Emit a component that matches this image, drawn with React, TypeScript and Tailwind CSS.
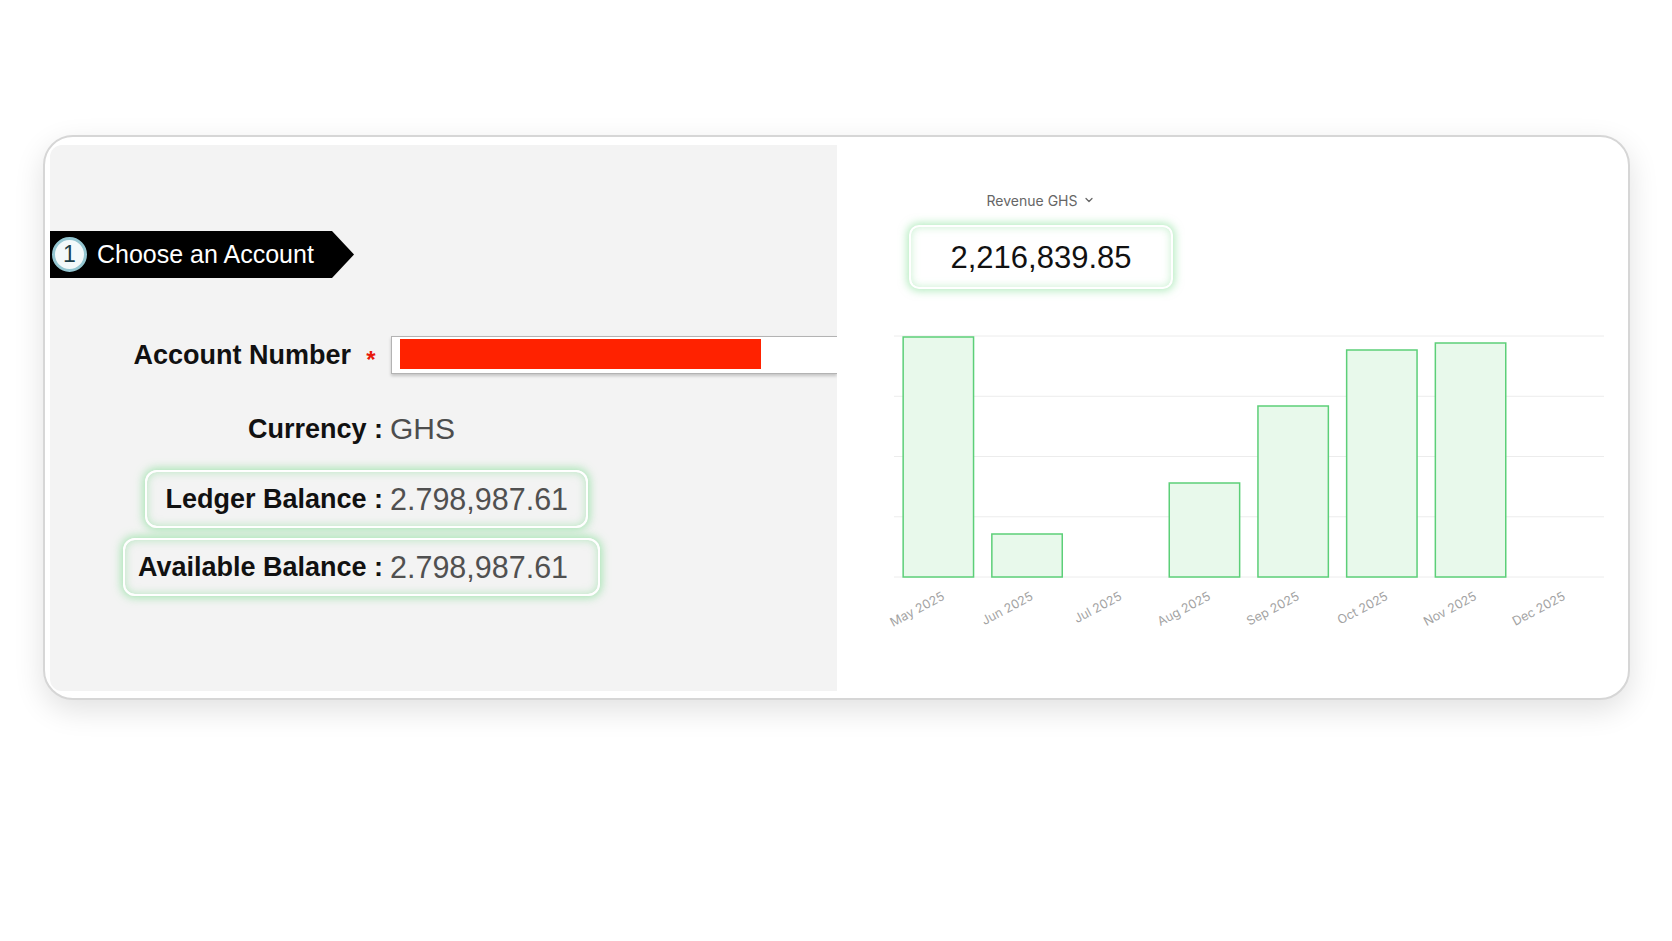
import { ChevronDown } from 'lucide-react';

const bars = [
  { label: 'May 2025', h: 240 },
  { label: 'Jun 2025', h: 43 },
  { label: 'Jul 2025', h: 0 },
  { label: 'Aug 2025', h: 94 },
  { label: 'Sep 2025', h: 171 },
  { label: 'Oct 2025', h: 227 },
  { label: 'Nov 2025', h: 234 },
  { label: 'Dec 2025', h: 0 },
];

const grid = [5, 65.25, 125.5, 185.75, 246];
const SLOT = 88.7;
const BAR_W = 70.4;

function RevenueChart() {
  return (
    <svg width={712} height={300} className="block overflow-visible">
      {grid.map((y) => (
        <line key={y} x1={0} x2={710} y1={y} y2={y} stroke="#ececec" strokeWidth={1} />
      ))}
      {bars.map((b, i) => {
        const x = i * SLOT + (SLOT - BAR_W) / 2;
        const cx = i * SLOT + SLOT / 2;
        return (
          <g key={b.label}>
            {b.h > 0 && (
              <rect
                x={x}
                y={246 - b.h}
                width={BAR_W}
                height={b.h}
                fill="#e8f9eb"
                stroke="#5ccf78"
                strokeWidth={1.5}
              />
            )}
            <text
              x={cx + 7}
              y={268}
              textAnchor="end"
              transform={`rotate(-28 ${cx + 7} 268)`}
              fill="#a3a3a3"
              fontSize={12.5}
              fontFamily="Inter, 'Noto Sans', sans-serif"
            >
              {b.label}
            </text>
          </g>
        );
      })}
    </svg>
  );
}

export default function App() {
  return (
    <div className="min-h-screen bg-white pt-[135px] pl-[43px]">
      {/* カード */}
      <div className="flex h-[565px] w-[1587px] rounded-[30px] border-2 border-[#d6d6d6] bg-white pl-[5px] pr-[5px] pt-[8px] pb-[7px] shadow-[0_10px_30px_rgba(0,0,0,0.12)]">
        {/* 左パネル */}
        <div
          className="flex w-[787px] flex-col overflow-hidden rounded-l-[12px] bg-[#f3f3f3] text-[#111]"
          style={{ fontFamily: "'Liberation Sans', Arial, sans-serif" }}
        >
          <div className="mt-[86px] flex h-[47px] w-[304px] items-center bg-black pl-[2px] [clip-path:polygon(0_0,282px_0,304px_50%,282px_100%,0_100%)]">
            <div className="flex h-[35px] w-[35px] items-center justify-center rounded-full border-[3px] border-[#94c6d1] bg-[#f3f9fa] text-[23px] leading-none text-[#1b3d48]">
              1
            </div>
            <span className="ml-[10px] text-[25px] leading-none text-white">Choose an Account</span>
          </div>

          <div className="mt-[58px] flex h-[38px] items-center">
            <span className="w-[301px] text-right text-[27px] font-bold leading-none">Account Number</span>
            <span className="mt-[10px] w-[40px] text-center text-[24px] font-bold leading-none text-[#e8190c]">*</span>
            <div className="flex h-[38px] flex-1 items-start border border-r-0 border-[#b3b3b3] bg-white pl-[8px] pt-[2px] shadow-[0_2px_3px_rgba(0,0,0,0.2)]">
              <div className="h-[30px] w-[361px] bg-[#ff2200]" />
            </div>
          </div>

          <div className="mt-[39px] flex h-[32px] items-center">
            <span className="w-[333px] text-right text-[27px] font-bold leading-none">Currency :</span>
            <span className="ml-[7px] text-[30px] leading-none text-[#4d4d4d]">GHS</span>
          </div>

          <div className="mt-[25px] ml-[95px] flex h-[58px] w-[443px] items-center rounded-[12px] border-2 border-white shadow-[0_0_9px_2px_rgba(120,220,140,0.6),inset_0_0_8px_rgba(120,220,140,0.5)]">
            <span className="w-[236px] text-right text-[27px] font-bold leading-none">Ledger Balance :</span>
            <span className="ml-[7px] text-[30.5px] leading-none text-[#505050]">2.798,987.61</span>
          </div>

          <div className="mt-[10px] ml-[73px] flex h-[58px] w-[477px] items-center rounded-[12px] border-2 border-white shadow-[0_0_9px_2px_rgba(120,220,140,0.6),inset_0_0_8px_rgba(120,220,140,0.5)]">
            <span className="w-[258px] text-right text-[27px] font-bold leading-none">Available Balance :</span>
            <span className="ml-[7px] text-[30.5px] leading-none text-[#505050]">2.798,987.61</span>
          </div>
        </div>

        {/* 右パネル */}
        <div className="flex flex-1 flex-col pl-[72px] pt-[45px]">
          <div className="flex w-[264px] flex-col items-center">
            <div
              className="flex h-[20px] items-center gap-[6px] text-[14px] text-[#666]"
              style={{ fontFamily: "Inter, 'Noto Sans', sans-serif" }}
            >
              Revenue GHS
              <ChevronDown size={12} strokeWidth={2.5} />
            </div>
            <div
              className="mt-[15px] flex h-[64px] w-[264px] items-center justify-center rounded-[10px] border-2 border-white bg-white text-[31px] leading-none text-[#111] shadow-[0_0_9px_2px_rgba(120,220,140,0.55),inset_0_0_8px_rgba(120,220,140,0.4)]"
              style={{ fontFamily: "'Liberation Sans', Arial, sans-serif" }}
            >
              2,216,839.85
            </div>
          </div>
          <div className="ml-[-15px] mt-[42px]">
            <RevenueChart />
          </div>
        </div>
      </div>
    </div>
  );
}
